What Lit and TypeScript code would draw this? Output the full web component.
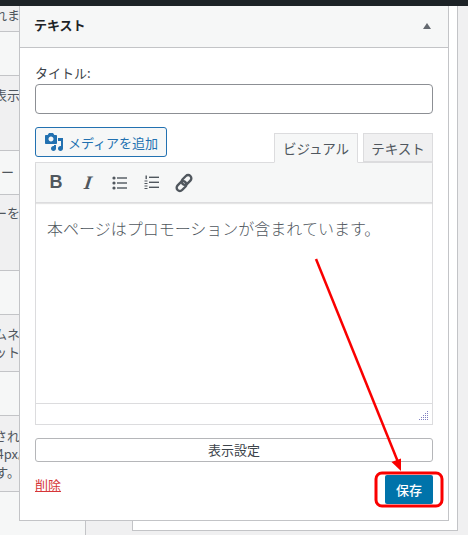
import { LitElement, html, css, svg } from "lit";
import { customElement } from "lit/decorators.js";

const rows = [
  { h: 26, lines: [["れま", 20]], pad: 0 },
  { h: 44, lines: [], pad: 0 },
  { h: 75, lines: [["表示", 20]], pad: 10 },
  { h: 44, lines: [["ー", 14]], pad: 12 },
  { h: 76, lines: [["ーを", 20]], pad: 9 },
  { h: 44, lines: [], pad: 0 },
  { h: 57, lines: [["ムネ", 20], ["ット", 20]], pad: 10 },
  { h: 44, lines: [], pad: 0 },
  { h: 76, lines: [["され", 20], ["4px。", 31], ["す。", 20]], pad: 11 },
];

@customElement("app-root")
export class AppRoot extends LitElement {
  static styles = css`
    :host { display: block; width: 468px; height: 535px; position: relative; overflow: hidden;
      background: #f0f0f1; font-family: "Noto Sans CJK JP", "Liberation Sans", sans-serif; color: #3c434a; font-size: 13px; }
    .adminbar { height: 6px; background: #1d2327; }
    .stage { display: grid; grid-template-columns: 86px 46px 326px 1fr; height: 529px; }
    .list { background: #f6f7f7; border-right: 1px solid #c3c4c7; box-sizing: border-box; display: flex; flex-direction: column; overflow: hidden; }
    .row { box-sizing: border-box; border-bottom: 1px solid #c3c4c7; flex: none; overflow: hidden; }
    .row:nth-child(odd) { background: #f0f0f1; }
    .row .line { display: flex; justify-content: flex-end; height: 18px; line-height: 18px; font-size: 13px; color: #50575e; white-space: nowrap; }
    .gap { background: #f0f0f1; }
    .box { background: #fff; border: 1px solid #c3c4c7; border-top: 0; height: 525px; box-sizing: border-box; }
    .panel { position: absolute; left: 19px; top: 6px; width: 430px; height: 515px; box-sizing: border-box;
      background: #fff; border: 1px solid #c3c4c7; border-top: 0; display: flex; flex-direction: column; }
    .head { height: 42px; box-sizing: border-box; background: #f6f7f7; border-bottom: 1px solid #c3c4c7; display: flex; align-items: center; justify-content: space-between; padding: 0 11px 4px 14px; font-size: 13px; font-weight: 700; color: #1d2327; }
    .caret { width: 0; height: 0; border-left: 4px solid transparent; border-right: 4px solid transparent; border-bottom: 6px solid #646970; margin: 2px 6px 0 0; }
    .body { padding: 0 15px; display: flex; flex-direction: column; flex: 1; }
    label { display: block; margin-top: 15px; padding-bottom: 2px; line-height: 19px; font-size: 13px; color: #3c434a; }
    .input { height: 30px; box-sizing: border-box; border: 1px solid #8c8f94; border-radius: 4px; background: #fff; }
    .tools { display: flex; justify-content: space-between; align-items: flex-end; margin-top: 13px; height: 35px; }
    .media { height: 30px; width: 132px; margin-bottom: 5px; box-sizing: border-box; border: 1px solid #2271b1; border-radius: 3px; background: #f6f7f7; color: #2271b1; display: flex; align-items: center; gap: 4px; padding-left: 8px; font-size: 13px; white-space: nowrap; }
    .media svg { flex: none; }
    .tabs { display: flex; gap: 5px; align-items: flex-end; }
    .tab { box-sizing: border-box; border: 1px solid #dcdcde; background: #f0f0f1; color: #50575e; font-size: 13.500px; height: 29px; display: flex; align-items: center; justify-content: center; width: 70px; position: relative; }
    .tab.on { width: 84px; height: 30px; background: #f6f7f7; border-bottom-color: #f6f7f7; margin-bottom: -1px; z-index: 1; }
    .editor { border: 1px solid #dcdcde; height: 263px; box-sizing: border-box; display: flex; flex-direction: column; }
    .bar { height: 40px; flex: none; box-sizing: border-box; background: #f6f7f7; border-bottom: 1px solid #dcdcde; box-shadow: 0 1px 1px rgba(0,0,0,.1); display: flex; align-items: center; padding-left: 10px; gap: 12px; }
    .btn { width: 20px; height: 20px; display: flex; align-items: center; justify-content: center; color: #50575e; }
    .b { font: 700 18px "Liberation Sans", sans-serif; }
    .i { font: italic 700 19px "Liberation Serif", serif; transform: skewX(-8deg); }
    .content { flex: 1; padding: 13px 11px; font-family: "Noto Sans CJK JP", serif; font-size: 16px; font-weight: 300; color: #50575e; line-height: 24px; white-space: nowrap; }
    .status { height: 21px; flex: none; box-sizing: border-box; border-top: 1px solid #dcdcde; position: relative; }
    .grip { position: absolute; right: 3px; bottom: 3px; }
    .settings { margin-top: 13px; height: 24px; box-sizing: border-box; border: 1px solid #b5b6b9; border-radius: 3px; background: #fff; text-align: center; line-height: 21px; font-size: 13px; color: #3c434a; }
    .foot { display: flex; justify-content: space-between; align-items: flex-start; margin-top: 13px; }
    .del { color: #d63638; text-decoration: underline; font-size: 13px; line-height: 19px; }
    .save { width: 48px; height: 29px; padding-bottom: 1px; box-sizing: border-box; background: #0073aa; color: #fff; font-size: 13px; font-weight: 500; display: flex; align-items: center; justify-content: center; border-radius: 2px; }
    .overlay { position: absolute; left: 0; top: 0; width: 468px; height: 535px; pointer-events: none; }
  `;

  render() {
    return html`
      <div class="adminbar"></div>
      <div class="stage">
        <div class="list">
          ${rows.map(
            (r) => html`<div class="row" style="height:${r.h}px;padding-top:${r.pad}px">
              ${r.lines.map((l) => html`<div class="line" style="width:${l[1]}px">${l[0]}</div>`)}
            </div>`
          )}
        </div>
        <div class="gap"></div>
        <div class="box"></div>
        <div class="gap"></div>
      </div>

      <div class="panel">
        <div class="head"><span>テキスト</span><span class="caret"></span></div>
        <div class="body">
          <label>タイトル:</label>
          <div class="input"></div>
          <div class="tools">
            <div class="media">
              <svg width="20" height="20" viewBox="0 0 20 20" fill="#2271b1">
                <path d="M13 11V4c0-.55-.45-1-1-1h-1.670L9 1H5L3.670 3H2c-.55 0-1 .45-1 1v7c0 .55.45 1 1 1h10c.55 0 1-.45 1-1zM7 4.500c1.380 0 2.500 1.120 2.500 2.500S8.380 9.500 7 9.500 4.500 8.380 4.500 7 5.620 4.500 7 4.500zM14 6h5v10.500c0 1.380-1.120 2.500-2.500 2.500S14 17.880 14 16.500s1.120-2.500 2.500-2.500c.17 0 .34.020.5.050V9h-3V6zm-4 8.050V13h2v3.500c0 1.380-1.120 2.500-2.500 2.500S7 17.880 7 16.500 8.120 14 9.500 14c.17 0 .34.020.5.050z" />
              </svg>
              <span>メディアを追加</span>
            </div>
            <div class="tabs">
              <div class="tab on">ビジュアル</div>
              <div class="tab">テキスト</div>
            </div>
          </div>
          <div class="editor">
            <div class="bar">
              <div class="btn b">B</div>
              <div class="btn i">I</div>
              <div class="btn">
                <svg width="16" height="14" viewBox="0 0 16 14" fill="#50575e">
                  <circle cx="2" cy="2" r="1.600" /><circle cx="2" cy="7" r="1.600" /><circle cx="2" cy="12" r="1.600" />
                  <rect x="5" y="1.300" width="10" height="1.400" /><rect x="5" y="6.300" width="10" height="1.400" /><rect x="5" y="11.300" width="10" height="1.400" />
                </svg>
              </div>
              <div class="btn">
                <svg width="16" height="15" viewBox="0 0 16 15" fill="#50575e">
                  <rect x="1.500" y="0.500" width="1.400" height="3.600" /><rect x="0.500" y="5.500" width="3" height="1" /><rect x="0.500" y="8" width="3" height="1" />
                  <rect x="0.500" y="10.500" width="3" height="1" /><rect x="0.500" y="13" width="3" height="1" />
                  <rect x="5" y="1.600" width="10" height="1.400" /><rect x="5" y="6.600" width="10" height="1.400" /><rect x="5" y="11.600" width="10" height="1.400" />
                </svg>
              </div>
              <div class="btn">
                <svg width="20" height="20" viewBox="0 0 20 20" fill="none" stroke="#50575e" stroke-width="2.400">
                  <rect x="9.300" y="1.400" width="6.400" height="11" rx="3.200" transform="rotate(45 12.500 6.900)" />
                  <rect x="4.300" y="7.600" width="6.400" height="11" rx="3.200" transform="rotate(45 7.500 13.100)" />
                </svg>
              </div>
            </div>
            <div class="content">本ページはプロモーションが含まれています。</div>
            <div class="status">
              <svg class="grip" width="10" height="10" viewBox="0 0 10 10" fill="#8080c0">
                ${[[8,0],[6,2],[8,2],[4,4],[6,4],[8,4],[2,6],[4,6],[6,6],[8,6],[0,8],[2,8],[4,8],[6,8],[8,8]].map(
                  ([x, y]) => svg`<rect x=${x} y=${y} width="1" height="1" />`
                )}
              </svg>
            </div>
          </div>
          <div class="settings">表示設定</div>
          <div class="foot">
            <span class="del">削除</span>
            <span class="save">保存</span>
          </div>
        </div>
      </div>

      <svg class="overlay" viewBox="0 0 468 535" fill="none">
        <line x1="316" y1="259" x2="398" y2="462" stroke="#fa0000" stroke-width="2.500" />
        <path d="M401 471 L391.500 462 L401 458.500 Z" fill="#fa0000" />
        <rect x="376" y="473" width="66" height="33" rx="6" stroke="#fa0000" stroke-width="3" />
      </svg>
    `;
  }
}
